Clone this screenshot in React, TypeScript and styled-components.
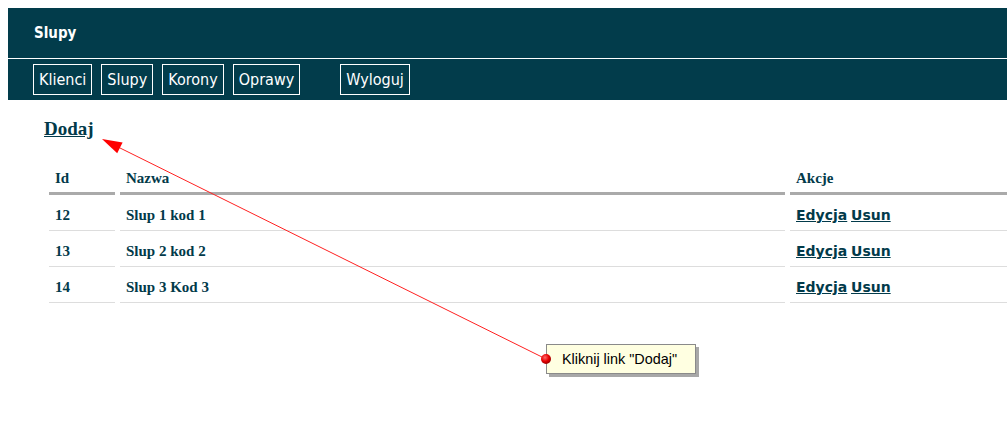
import React from "react";
import styled, { createGlobalStyle } from "styled-components";

const Global = createGlobalStyle`
  html, body { margin: 0; padding: 0; background: #fff; }
  body { margin: 8px 0 0 8px; overflow: hidden; font-family: "Liberation Serif", serif; }
`;

const TEAL = "#023c4b";
const INK = "#023a4a";

const Page = styled.div`
  position: relative;
  width: 1040px;
  min-height: 436px;
`;

const TitleBar = styled.header`
  height: 50px;
  background: ${TEAL};
  display: flex;
  align-items: center;
  padding-left: 26px;
  border-bottom: 1px solid #fff;
  font-family: "DejaVu Sans Condensed", "Liberation Sans", sans-serif;
  font-weight: bold;
  font-size: 15px;
  color: #fff;
`;

const Nav = styled.nav`
  background: ${TEAL};
  height: 41px;
  box-sizing: border-box;
  padding: 5px 0 5px 25px;
  display: flex;
  gap: 9px;
`;

const NavButton = styled.a<{ $far?: boolean }>`
  display: block;
  box-sizing: border-box;
  height: 31px;
  border: 1px solid #fff;
  padding: 0 5px;
  line-height: 29px;
  font-family: "DejaVu Sans Condensed", "Liberation Sans", sans-serif;
  font-size: 16px;
  color: #fff;
  text-decoration: none;
  margin-left: ${(p) => (p.$far ? "31px" : "0")};
`;

const Main = styled.main`
  padding-left: 36px;
`;

const AddLink = styled.a`
  display: inline-block;
  margin-top: 18px;
  line-height: 22px;
  font-family: "Liberation Serif", serif;
  font-weight: bold;
  font-size: 19px;
  color: ${INK};
  text-decoration: underline;
`;

const Table = styled.table`
  margin-top: 18px;
  border-collapse: separate;
  border-spacing: 5px 0;
  table-layout: fixed;
  width: 1001px;
  font-family: "Liberation Serif", serif;
  font-weight: bold;
  font-size: 15px;
  color: ${INK};
`;

const Th = styled.th`
  text-align: left;
  padding: 11px 6px 4px;
  line-height: 19px;
  border-bottom: 3px solid #aaaaaa;
`;

const Td = styled.td`
  padding: 11px 6px 5px;
  line-height: 19px;
  border-bottom: 1px solid #dddddd;
`;

const ActionLink = styled.a`
  font-family: "DejaVu Sans", "Liberation Sans", sans-serif;
  font-weight: bold;
  font-size: 14px;
  color: ${INK};
  text-decoration: underline;
`;

const Overlay = styled.svg`
  position: absolute;
  left: -8px;
  top: -8px;
  pointer-events: none;
`;

const Callout = styled.div`
  position: absolute;
  left: 538px;
  top: 336px;
  width: 150px;
  height: 30px;
  box-sizing: border-box;
  background: #ffffe1;
  border: 1px solid #8a8a8a;
  box-shadow: 3px 3px 0 #a8a8a8;
  font-family: "Liberation Sans", sans-serif;
  font-size: 14.4px;
  color: #000;
  line-height: 28px;
  padding-left: 15px;
`;

const rows = [
  { id: 12, name: "Slup 1 kod 1" },
  { id: 13, name: "Slup 2 kod 2" },
  { id: 14, name: "Slup 3 Kod 3" },
];

export default function App() {
  return (
    <>
      <Global />
      <Page>
        <TitleBar>Slupy</TitleBar>
        <Nav>
          <NavButton>Klienci</NavButton>
          <NavButton>Slupy</NavButton>
          <NavButton>Korony</NavButton>
          <NavButton>Oprawy</NavButton>
          <NavButton $far>Wyloguj</NavButton>
        </Nav>
        <Main>
          <AddLink href="#">Dodaj</AddLink>
          <Table>
            <colgroup>
              <col style={{ width: 66 }} />
              <col style={{ width: 665 }} />
              <col />
            </colgroup>
            <thead>
              <tr>
                <Th>Id</Th>
                <Th>Nazwa</Th>
                <Th>Akcje</Th>
              </tr>
            </thead>
            <tbody>
              {rows.map((r) => (
                <tr key={r.id}>
                  <Td>{r.id}</Td>
                  <Td>{r.name}</Td>
                  <Td>
                    <ActionLink href="#">Edycja</ActionLink>{" "}
                    <ActionLink href="#">Usun</ActionLink>
                  </Td>
                </tr>
              ))}
            </tbody>
          </Table>
        </Main>
        <Callout>Kliknij link "Dodaj"</Callout>
        <Overlay width="1007" height="444" viewBox="0 0 1007 444">
          <defs>
            <radialGradient id="dot" cx="40%" cy="35%" r="65%">
              <stop offset="0%" stopColor="#ff6a6a" />
              <stop offset="60%" stopColor="#e60000" />
              <stop offset="100%" stopColor="#9a0000" />
            </radialGradient>
          </defs>
          <line x1="546" y1="359" x2="116" y2="146" stroke="#ff2020" strokeWidth="1" />
          <polygon points="102,139 122.6,142.5 117.2,153.3" fill="#ff0000" />
          <circle cx="546" cy="359" r="5" fill="url(#dot)" />
        </Overlay>
      </Page>
    </>
  );
}
